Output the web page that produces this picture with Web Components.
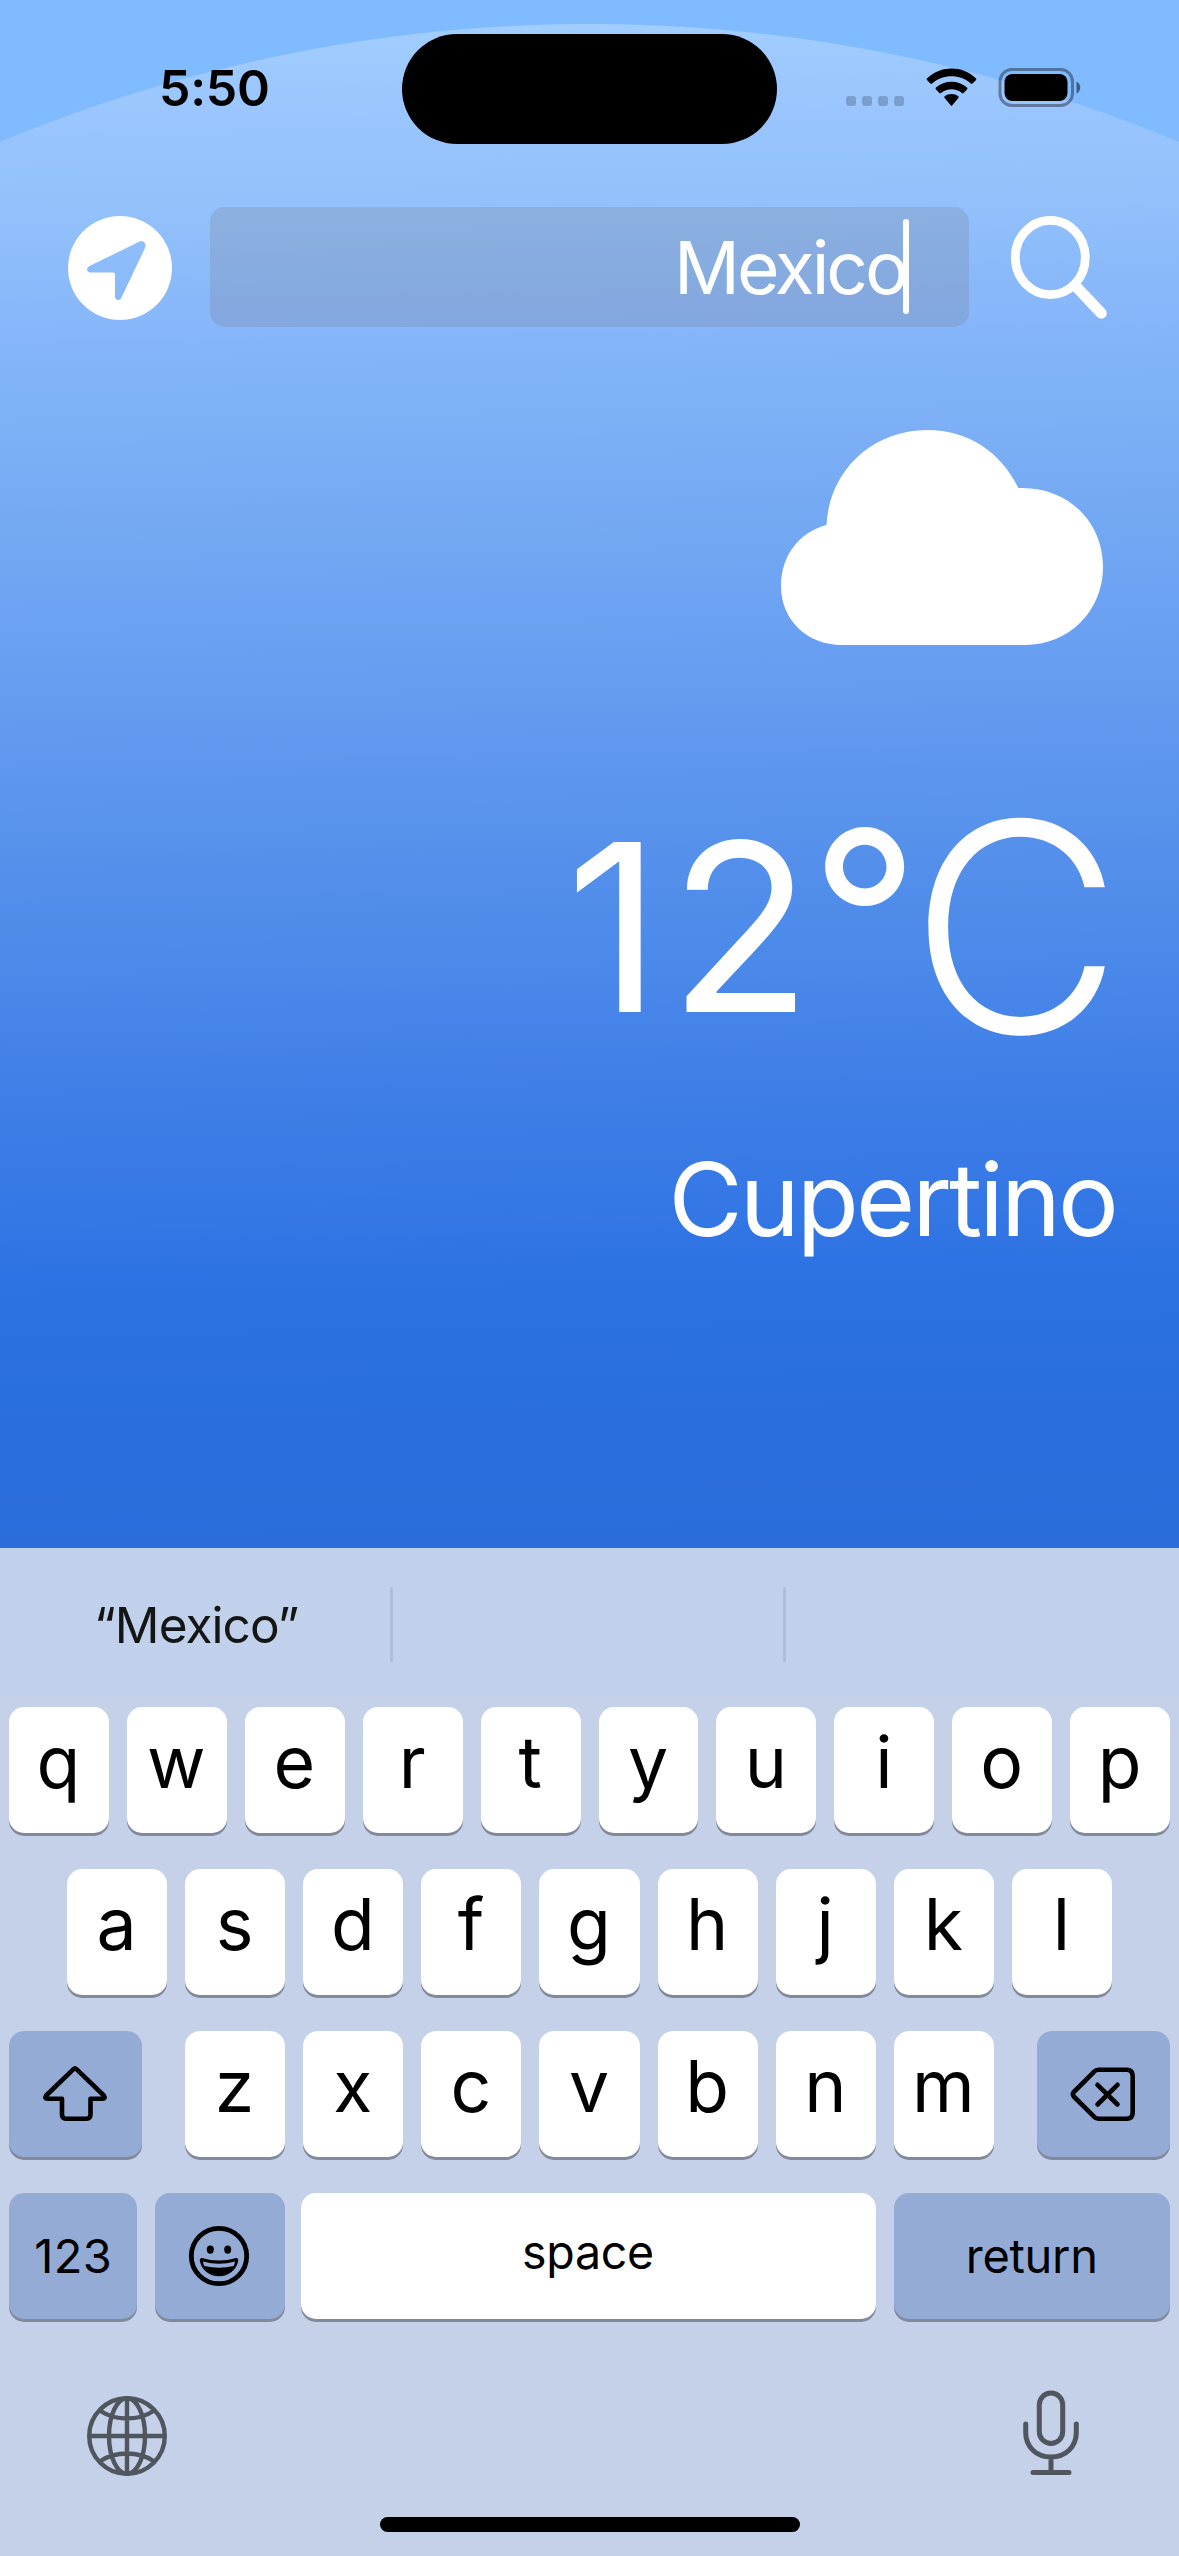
<!DOCTYPE html>
<html lang="en">
<head>
<meta charset="utf-8">
<title>Weather</title>
<style>
html,body{margin:0;padding:0;background:#c5d1e9}
body{width:1179px;height:2556px;overflow:hidden;font-family:Inter,"Liberation Sans",sans-serif}
</style>
</head>
<body>
<weather-app></weather-app>
<script>
const define = (name, html, init) => customElements.define(name, class extends HTMLElement {
  constructor() {
    super();
    const t = document.createElement('template');
    t.innerHTML = html;
    this.attachShadow({ mode: 'open' }).appendChild(t.content.cloneNode(true));
  }
  connectedCallback() { if (init) init(this); }
});

// A label whose box is exactly the cap height tall and `w` pixels of ink wide.
const ctx = document.createElement('canvas').getContext('2d');
define('fit-label', `<style>
  :host{display:block;flex:none;white-space:nowrap;line-height:.7275;color:inherit}
</style><slot></slot>`, el => {
  const size = +el.getAttribute('size'), weight = el.getAttribute('weight') || 400;
  const text = el.textContent;
  ctx.font = `${weight} ${size}px Inter`;
  const m = ctx.measureText(text);
  const w = +el.getAttribute('w') || 0;
  const ink = m.actualBoundingBoxLeft + m.actualBoundingBoxRight;
  el.style.fontSize = size + 'px';
  el.style.fontWeight = weight;
  if (w) {
    el.style.width = w + 'px';
    el.style.textIndent = m.actualBoundingBoxLeft + 'px';
    if (text.length > 1) el.style.letterSpacing = (w - ink) / (text.length - 1) + 'px';
  }
});

define('status-bar', `<style>
  :host{display:flex;align-items:flex-start;height:207px;box-sizing:border-box;padding-left:162px;color:#000}
  fit-label{margin-top:70px}
  .island{width:375px;height:110px;border-radius:55px;background:#000;margin:34px 0 0 134px}
  .dots{display:flex;gap:6px;margin:96px 0 0 69px}
  .dots i{width:10px;height:10px;border-radius:3px;background:rgba(0,0,0,.2)}
  .wifi{margin:68px 0 0 22px}
  .bat{margin:67px 0 0 21px}
</style>
<fit-label size="50" weight="600" w="106">5:50</fit-label>
<div class="island"></div>
<div class="dots"><i></i><i></i><i></i><i></i></div>
<svg class="wifi" width="51" height="39" viewBox="0 0 51 39"><g fill="#000">
 <path d="M1.2 12.2Q.2 11.2 1.2 10.2C15-2.8 36.500-2.800 49.800 10.200Q50.800 11.200 49.800 12.200L46.600 15.400Q45.700 16.200 44.800 15.400C34 5.800 17 5.800 6.200 15.400Q5.300 16.200 4.400 15.400Z"/>
 <path d="M10 21.500Q9 20.500 10 19.500C18.500 11.800 32.500 11.800 41 19.500Q42 20.500 41 21.500L37.600 25Q36.800 25.800 35.900 25C30 20 21 20 15.100 25Q14.200 25.800 13.400 25Z"/>
 <path d="M18.600 30Q17.700 29.100 18.700 28.300C22.700 25.300 28.300 25.300 32.300 28.300Q33.300 29.100 32.400 30L26.300 37.200Q25.500 38.200 24.700 37.200Z"/></g></svg>
<svg class="bat" width="84" height="42" viewBox="0 0 84 42">
 <rect x="2" y="2.500" width="72.500" height="36" rx="12" fill="none" stroke="#000" stroke-opacity=".38" stroke-width="3"/>
 <rect x="6.500" y="7" width="63" height="27" rx="8" fill="#000"/>
 <path d="M78.500 14.500C83.500 16.500 83.500 24.500 78.500 26.500Z" fill="#000" fill-opacity=".5"/></svg>`);

define('search-bar', `<style>
  :host{display:flex;height:120px;padding-left:68px;align-items:flex-start;color:#fff}
  .loc,.mag{flex:none;margin-top:9px}
  .field{display:flex;align-items:flex-start;justify-content:flex-end;box-sizing:border-box;width:759px;height:120px;margin:0 41px 0 38px;padding-right:60px;border-radius:15px;background:rgba(120,120,128,.22)}
  fit-label{margin:33.600px -3px 0 0}
  .caret{width:6px;height:95px;margin-top:12px;border-radius:3px;background:#fff}
</style>
<svg class="loc" width="104" height="104" viewBox="0 0 104 104"><path fill="#fff" fill-rule="evenodd" d="M52 0A52 52 0 1 1 52 104A52 52 0 1 1 52 0ZM71.500 25.600L21.500 50Q19 51.200 19 53.200Q19.300 56.300 22.500 56.400H45Q47 56.400 47 58.400V80.500Q47.300 83.700 50 84Q52.400 84 53.500 81.500L77 32Q78.300 28.800 76.500 26.800Q74.500 24.200 71.500 25.600Z"/></svg>
<div class="field"><fit-label size="73" weight="400" w="226">Mexico</fit-label><div class="caret"></div></div>
<svg class="mag" width="98" height="104" viewBox="0 0 98 104" fill="none" stroke="#fff"><ellipse cx="40.300" cy="41.500" rx="35" ry="37.200" stroke-width="8.800"/><path d="M67 71.500L91.300 97.300" stroke-width="11" stroke-linecap="round"/></svg>`);

define('current-weather', `<style>
  :host{display:flex;flex-direction:column;align-items:flex-end;padding-top:103px;color:#fff}
  .cloud{display:block;margin-right:76px}
  .temp{display:flex;align-items:flex-end;height:215px;margin:173px 71px 0 0}
  .num{margin-bottom:20.500px}
  .deg{margin:11px 23px 0 29px;align-self:flex-start}
  .city{margin:129.500px 65px 0 0}
</style>
<svg class="cloud" width="322" height="215" viewBox="0 0 322 215"><path fill="#fff" d="M61 215C26 215 0 190 0 156C0 126 18 102 45.500 95C48 41 91 0 146.500 0C187 0 220 22 237.300 58C286 56 322 91 322 137C322 181 288 215 244 215Z"/></svg>
<div class="temp"><fit-label class="num" size="234" weight="400" w="220">12</fit-label><fit-label class="deg" size="240" weight="400" w="80">°</fit-label><fit-label size="292" weight="300" w="180">C</fit-label></div>
<fit-label class="city" size="101.500" weight="400" w="439.500">Cupertino</fit-label>`);

define('suggestion-bar', `<style>
  :host{display:flex;height:147px;background:#c2d1eb;color:#141615;align-items:flex-start}
  .slot{box-sizing:border-box;width:390px;height:147px;padding:59px 0 0 97px}
  i{width:3px;height:75px;margin-top:39px;border-radius:2px;background:#b0bdd7}
</style><div class="slot"><slot></slot></div><i></i><div class="slot"></div><i></i>`);

define('key-cap', `<style>
  :host{display:flex;flex:1 1 0;min-width:0;justify-content:center;align-items:flex-start;box-sizing:border-box;height:126px;border-radius:15px;background:#fff;box-shadow:0 3px 0 #81899a;color:#000}
  :host([dark]){background:#94abd6}
  svg,::slotted(svg){display:block}
</style><slot></slot>`);

define('key-row', `<style>
  :host{display:flex;gap:18px;height:126px}
</style><slot></slot>`, el => {
  const letters = el.getAttribute('letters');
  if (!letters || el.dataset.ready) return;
  el.dataset.ready = 1;
  const before = el.querySelector('[tail]');
  for (const ch of letters) {
    const k = document.createElement('key-cap');
    k.innerHTML = `<fit-label size="71.500" weight="375" style="margin:29px 1px 0 0">${ch}</fit-label>`;
    el.insertBefore(k, before);
  }
});

define('ios-keyboard', `<style>
  :host{display:flex;flex-direction:column;height:1008px;background:#c5d1e9}
  .rows{display:flex;flex-direction:column;gap:36px;padding:12px 9px 0}
  .mid{padding:0 58px}
  [head],[tail]{flex:none;width:133px}
  [head]{margin-right:25px}[tail]{margin-left:25px}
  .foot{display:flex;justify-content:space-between;align-items:flex-start;padding:69px 98px 0 85px}
  .home{width:420px;height:15px;border-radius:8px;background:#000;margin:39px auto 0}
</style>
<suggestion-bar><fit-label size="49.500" weight="400" w="200.500">“Mexico”</fit-label></suggestion-bar>
<div class="rows">
<key-row letters="qwertyuiop"></key-row>
<key-row class="mid" letters="asdfghjkl"></key-row>
<key-row letters="zxcvbnm">
 <key-cap dark head><svg width="66" height="60" viewBox="0 0 66 60" style="margin:33px 0 0 -1px" fill="none" stroke="#000" stroke-width="4.600" stroke-linejoin="round"><path d="M31.500 5.200Q33 3.600 34.500 5.200L61.800 31.500Q64 34.700 60.500 34.700H48.500V50.500Q48.500 54.700 44.500 54.700H24Q20 54.700 20 50.500V34.700H5.500Q2 34.700 4.200 31.500Z"/></svg></key-cap>
 <key-cap dark tail><svg width="66" height="56" viewBox="0 0 66 56" style="margin:35.500px 0 0 -1px" fill="none" stroke="#000" stroke-width="4.600" stroke-linejoin="round" stroke-linecap="round"><path d="M28.500 2.800H56.500Q62.700 2.800 62.700 9V45.500Q62.700 51.700 56.500 51.700H28.500Q25.800 51.700 24 49.700L3.800 29.500Q2 27.300 3.800 25L24 4.800Q25.800 2.800 28.500 2.800Z"/><path d="M27.500 17.800L47.500 37.500M47.500 17.800L27.500 37.500"/></svg></key-cap>
</key-row>
<key-row>
 <key-cap dark style="flex:0 0 128px"><fit-label size="47" w="73.500" style="margin-top:45.500px">123</fit-label></key-cap>
 <key-cap dark style="flex:0 0 130px"><svg width="62" height="62" viewBox="0 0 62 62" style="margin:32px 0 0 -3px"><circle cx="31" cy="31" r="27.700" fill="none" stroke="#000" stroke-width="4.800"/><ellipse cx="22.300" cy="24.600" rx="3.500" ry="4.200"/><ellipse cx="39.700" cy="24.600" rx="3.500" ry="4.200"/><path d="M14 33Q31 38 48 33Q50.500 32.600 50.300 35.500C48.500 45.500 40.500 51.200 31 51.200C21.500 51.200 13.500 45.500 11.700 35.500Q11.500 32.600 14 33Z"/><path d="M15 36.500Q31 41 47 36.500Q46.700 39 45.600 41Q31 44.600 16.400 41Q15.300 39 15 36.500Z" fill="#94abd6"/></svg></key-cap>
 <key-cap style="flex:0 0 575px;margin-left:-2px"><fit-label size="46.500" w="128" style="margin:43px 1px 0 0">space</fit-label></key-cap>
 <key-cap dark><fit-label size="47" w="126.500" style="margin-top:46px">return</fit-label></key-cap>
</key-row>
</div>
<div class="foot">
<svg width="84" height="84" viewBox="0 0 84 84" style="margin-top:6px" fill="none" stroke="#50565e" stroke-width="4.400"><circle cx="42" cy="42" r="37.800"/><ellipse cx="42" cy="42" rx="18" ry="37.800"/><path d="M42 4V80M4 42H80M15.500 17Q27 24.500 42 24.500T68.500 17M15.500 67Q27 59.500 42 59.500T68.500 67"/></svg>
<svg width="60" height="90" viewBox="0 0 60 90" fill="none" stroke="#50565e" stroke-width="5" stroke-linecap="round"><rect x="18.300" y="5" width="23.400" height="50.500" rx="11.700"/><path d="M4.700 36V44.500C4.700 59 15.500 69 30 69S55.300 59 55.300 44.500V36M30 69V84M12 84.500H48"/></svg>
</div>
<div class="home"></div>`);

define('weather-app', `<style>
  :host{display:flex;flex-direction:column;width:1179px;height:2556px}
  .sky{display:flex;flex-direction:column;height:1548px;background:
   radial-gradient(circle 1600px at 589.500px 1555px,transparent 1530.500px,#80bbff 1531.500px),
   linear-gradient(179deg,#a3ceff 24px,#9ac5fe 120px,#93c2fb 200px,#87b6fa 330px,#80b2f6 400px,#73a8f3 540px,#679ef1 680px,#5b95ec 800px,#4c8aea 960px,#3f7ee6 1100px,#3678e5 1200px,#2e73e3 1280px,#2b70e0 1350px,#2a6cda 1560px)}
</style>
<div class="sky"><status-bar></status-bar><search-bar></search-bar><current-weather></current-weather></div>
<ios-keyboard></ios-keyboard>`);
</script>
</body>
</html>
